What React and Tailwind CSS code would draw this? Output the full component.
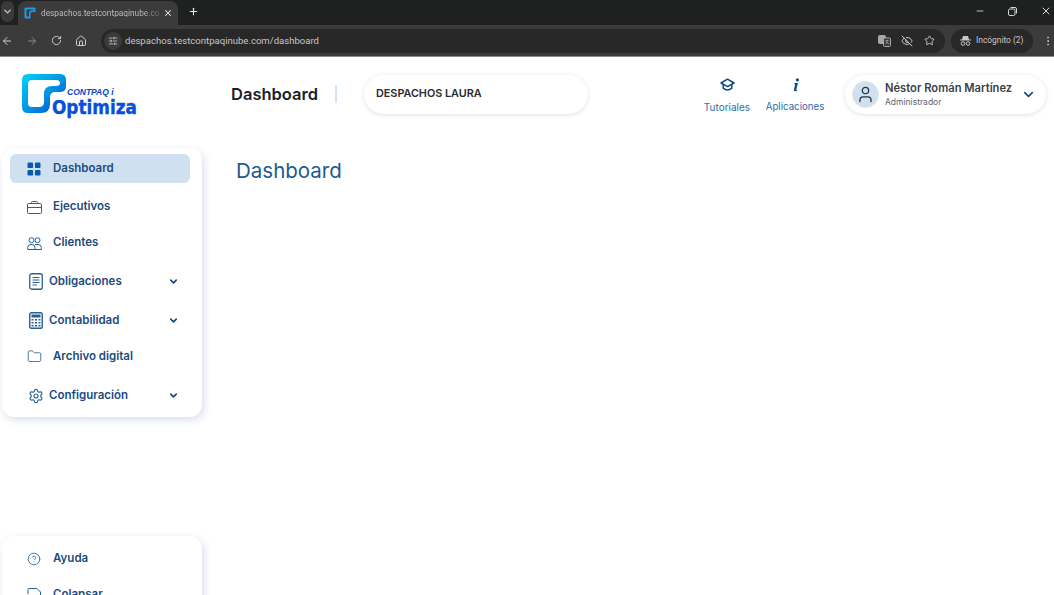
import React from "react";
import { ChevronDown, X, Plus, ArrowLeft, ArrowRight, RotateCw, Home, SlidersHorizontal, EyeOff, Star, EllipsisVertical, Minus, User, Folder, Settings, CircleHelp } from "lucide-react";

const inter = { fontFamily: "Inter, sans-serif" };
const roboto = { fontFamily: "Roboto, sans-serif" };

function Logo() {
    return (
        <svg width="120" height="48" viewBox="0 -2 120 48" className="block">
            <defs>
                <linearGradient id="lg" x1="0" y1="0" x2="1" y2="1">
                    <stop offset="0" stopColor="#00d4f5" />
                    <stop offset="0.55" stopColor="#0090e0" />
                    <stop offset="1" stopColor="#0a3fc4" />
                </linearGradient>
            </defs>
            <path
                d="M7 1H39Q45 1 45 7V13Q45 19 39 19H34Q30 19 29 23V31Q29 40 20 40H7Q1 40 1 34V7Q1 1 7 1ZM11 7Q7 7 7 11V30Q7 34 11 34H18Q23 34 23 29V21Q23 13 31 13H35Q39 13 39 10Q39 7 35 7Z"
                fill="url(#lg)"
                fillRule="evenodd"
            />
            <text x="46" y="22" fontFamily="Liberation Sans, sans-serif" fontSize="8.5" fontWeight="700" fontStyle="italic" fill="#0b46c8">CONTPAQ i</text>
            <text x="31" y="41" fontFamily="DejaVu Sans, sans-serif" fontSize="20" fontWeight="700" fill="#0650dc" stroke="#0650dc" strokeWidth="0.4" textLength="85" lengthAdjust="spacingAndGlyphs">Optimiza</text>
        </svg>
    );
}

function BrowserBar() {
    return (
        <div className="text-[#c7c7c7]" style={inter}>
            <div className="h-[25px] bg-[#1f2120] flex items-end pl-[1px]">
                <div className="h-[21px] w-[13px] mb-[3px] rounded-md bg-[#3a3a3a] flex items-center justify-center">
                    <ChevronDown size={11} strokeWidth={3} />
                </div>
                <div className="ml-[4px] h-[24px] w-[160px] bg-[#3b3b3b] rounded-t-lg flex items-center pl-[6px] pr-[5px]">
                    <svg width="12" height="12" viewBox="0 0 12 12" className="shrink-0">
                        <path d="M1.5 0.5H10.5Q11.5 0.5 11.5 1.5V5H8Q6.5 5 6.5 6.5V11.5H1.5Q0.5 11.5 0.5 10.5V1.5Q0.5 0.5 1.5 0.5ZM2.5 2.5V9.5H5V6Q5 3.5 7.5 3.5H9.5V2.5Z" fill="#1e9be8" fillRule="evenodd" />
                    </svg>
                    <span className="ml-[5px] text-[8.3px] leading-none whitespace-nowrap bg-linear-to-r from-[#c4c4c4] from-85% to-[#5a5a5a] bg-clip-text text-transparent" style={roboto}>despachos.testcontpaqinube.co</span>
                    <X size={10} strokeWidth={2.5} className="ml-auto shrink-0 text-[#e6e6e6]" />
                </div>
                <Plus size={11} strokeWidth={2.5} className="ml-[10px] mb-[8px] text-[#e6e6e6]" />
                <div className="ml-auto flex items-center mb-[8px] text-[#d8d8d8]">
                    <Minus size={10} className="mr-[23px]" />
                    <svg width="9" height="9" viewBox="0 0 9 9" fill="none" stroke="#d8d8d8" className="mr-[23px]">
                        <rect x="0.5" y="2" width="6.5" height="6.5" rx="1.5" />
                        <path d="M2.5 0.5H7Q8.5 0.5 8.5 2V6.5" />
                    </svg>
                    <X size={12} className="mr-[2px]" />
                </div>
            </div>
            <div className="h-[32px] bg-[#3b3b3b] flex items-center border-b border-[#8a8a8a]">
                <ArrowLeft size={12} className="ml-[1px] text-[#d0d0d0]" />
                <ArrowRight size={12} className="ml-[13px] text-[#8a8a8a]" />
                <RotateCw size={11} className="ml-[13px] text-[#d0d0d0]" />
                <Home size={12} className="ml-[13px] text-[#d0d0d0]" />
                <div className="ml-[14px] w-[844px] h-[24px] rounded-full bg-[#282828] flex items-center pl-[3px] pr-[10px]">
                    <div className="w-[18px] h-[18px] rounded-full bg-[#3b3b3b] flex items-center justify-center">
                        <SlidersHorizontal size={10} />
                    </div>
                    <span className="ml-[3px] text-[9.55px] leading-none text-[#c7c7c7]" style={roboto}>despachos.testcontpaqinube.com/dashboard</span>
                    <svg width="13" height="12" viewBox="0 0 13 12" fill="none" stroke="#a8a8a8" className="ml-auto">
                        <rect x="0.5" y="0.5" width="7" height="8" rx="1" fill="#a8a8a8" />
                        <rect x="5.5" y="3" width="7" height="8.5" rx="1" fill="#3b3b3b" />
                        <path d="M7.5 5.5H10.5M9 5.5Q9 8 7.5 9M9 7Q9.5 8.5 11 9" strokeWidth="0.8" />
                    </svg>
                    <EyeOff size={12} className="ml-[10px]" />
                    <Star size={11} className="ml-[11px]" />
                </div>
                <div className="ml-[6px] w-[82px] h-[24px] rounded-full bg-[#282828] flex items-center pl-[9px]">
                    <svg width="11" height="11" viewBox="0 0 11 11" fill="#c7c7c7">
                        <path d="M3 1H8L9 4.5H11V5.5H0V4.5H2Z" />
                        <circle cx="3" cy="8.5" r="1.8" fill="none" stroke="#c7c7c7" />
                        <circle cx="8" cy="8.5" r="1.8" fill="none" stroke="#c7c7c7" />
                    </svg>
                    <span className="ml-[5px] text-[8.4px] leading-none whitespace-nowrap" style={roboto}>Incógnito (2)</span>
                </div>
                <EllipsisVertical size={12} className="ml-[9px]" />
            </div>
        </div>
    );
}

function CapIcon() {
    return (
        <svg width="15" height="14" viewBox="0 0 15 14" fill="none" stroke="#0b4a85" strokeWidth="1.5" strokeLinejoin="round">
            <path d="M7.5 1.2L14 5L7.5 8.6L1 5Z" />
            <path d="M3.2 6.4V10.2Q7.5 13.6 11.8 10.2V6.4" />
        </svg>
    );
}

function AppsIcon() {
    return (
        <svg width="15" height="14" viewBox="0 0 15 14" fill="#0b4a85">
            <circle cx="9.4" cy="1.8" r="1.6" />
            <path d="M6.6 5H10L8.3 11.2Q8 12 9 11.8L8.7 13Q5.3 14 6 11.5L7.2 6.2L6.3 6.2Z" />
        </svg>
    );
}

function Header() {
    return (
        <header className="h-[74px] mb-[17px] flex items-center">
            <div className="ml-[21px] w-[210px] pt-[2px]">
                <Logo />
            </div>
            <h2 className="text-[16.5px] font-semibold text-[#1d1d1f] leading-none">Dashboard</h2>
            <div className="ml-[17px] w-[2px] h-[18px] bg-[#d5e4f4]" />
            <div className="ml-[27px] w-[224px] h-[39px] rounded-[20px] bg-white shadow-[0_1px_4px_rgba(30,60,110,0.16)] flex items-center pl-[12px]">
                <span className="text-[10.8px] font-semibold text-[#2a2a2c]">DESPACHOS LAURA</span>
            </div>
            <div className="ml-auto flex items-start text-[#2f6da5] text-[10px] leading-none">
                <div className="flex flex-col items-center w-[46px]">
                    <div className="h-[17px] flex items-center"><CapIcon /></div>
                    <span className="mt-[9px]">Tutoriales</span>
                </div>
                <div className="flex flex-col items-center ml-[16px] w-[58px]">
                    <div className="h-[17px] flex items-center"><AppsIcon /></div>
                    <span className="mt-[9px] text-[9.7px]">Aplicaciones</span>
                </div>
            </div>
            <div className="ml-[21px] mr-[8px] w-[201px] h-[39px] rounded-[20px] bg-white shadow-[0_1px_4px_rgba(30,60,110,0.16)] flex items-center pl-[8px]">
                <div className="w-[25px] h-[25px] rounded-full bg-[#cfe0f1] flex items-center justify-center ring-1 ring-[#e6e6e6]">
                    <User size={19} strokeWidth={1.6} className="text-[#27323f]" />
                </div>
                <div className="ml-[7px] flex flex-col">
                    <span className="text-[11.2px] font-semibold leading-[15px] text-[#3a3f47] whitespace-nowrap">Néstor Román Martínez</span>
                    <span className="text-[8.5px] leading-[12px] text-[#5f6670]">Administrador</span>
                </div>
                <ChevronDown size={15} strokeWidth={2.5} className="ml-auto mr-[10px] text-[#0b4a85]" />
            </div>
        </header>
    );
}

function NavItem({ icon, label, active, caret, h = "h-[36px]" }) {
    return (
        <div className={`${h} ml-[8px] mr-[12px] rounded-[6px] flex items-center ${active ? "bg-[#cfe0f1]" : ""} ${caret ? "pl-[17px]" : "pl-[16px]"}`}>
            <div className={`${caret ? "w-[18px]" : "w-[16px]"} shrink-0 flex items-center justify-center text-[#285f94]`}>{icon}</div>
            <span className={`${caret ? "ml-[4px]" : "ml-[11px]"} ${active ? "pt-[1px]" : ""} text-[11.5px] font-semibold text-[#1b4c80]`}>{label}</span>
            {caret && <ChevronDown size={11} strokeWidth={3.5} className="ml-auto mr-[11px] text-[#0b4a85]" />}
        </div>
    );
}

const DashIcon = (
    <svg width="14" height="14" viewBox="0 0 14 14" fill="#0b5ab0">
        <rect x="0.5" y="0.5" width="5.6" height="5.6" rx="1.2" />
        <rect x="7.9" y="0.5" width="5.6" height="5.6" rx="1.2" />
        <rect x="0.5" y="7.9" width="5.6" height="5.6" rx="1.2" />
        <rect x="7.9" y="7.9" width="5.6" height="5.6" rx="1.2" />
    </svg>
);

const CaseIcon = (
    <svg width="15" height="13" viewBox="0 0 15 13" fill="none" stroke="currentColor">
        <rect x="0.5" y="2.5" width="14" height="10" rx="1.2" />
        <path d="M0.5 6.5H14.5M4.5 2.5V1.5Q4.5 0.5 5.5 0.5H9.5Q10.5 0.5 10.5 1.5V2.5" />
    </svg>
);

const PeopleIcon = (
    <svg width="15" height="13" viewBox="0 0 15 13" fill="none" stroke="currentColor">
        <circle cx="4.5" cy="3.2" r="2.5" />
        <circle cx="10.5" cy="3.2" r="2.5" />
        <path d="M0.7 12.5V10.5Q0.7 7.5 4 7.5H5Q8 7.5 8 10.5V12.5ZM8 7.5H11Q14.3 7.5 14.3 10.5V12.5H8" />
    </svg>
);

const DocIcon = (
    <svg width="14" height="17" viewBox="0 0 14 17" fill="none" stroke="currentColor">
        <rect x="0.75" y="0.75" width="12.5" height="15.5" rx="2" strokeWidth="1.3" />
        <path d="M3.5 4.5H10.5M3.5 7H10.5M3.5 9.5H10.5M3.5 12H8" />
    </svg>
);

const CalcIcon = (
    <svg width="14" height="17" viewBox="0 0 14 17">
        <rect x="0.75" y="0.75" width="12.5" height="15.5" rx="1.5" fill="none" stroke="#285f94" strokeWidth="1.4" />
        <rect x="2.5" y="2.5" width="9" height="3" fill="#285f94" />
        <path d="M2.5 7H4.5V8.6H2.5ZM6 7H8V8.6H6ZM9.5 7H11.5V8.6H9.5ZM2.5 10H4.5V11.6H2.5ZM6 10H8V11.6H6ZM9.5 10H11.5V11.6H9.5ZM2.5 13H4.5V14.6H2.5ZM6 13H8V14.6H6ZM9.5 13H11.5V14.6H9.5Z" fill="#285f94" />
    </svg>
);

const CollapseIcon = (
    <svg width="15" height="14" viewBox="0 0 15 14" fill="none" stroke="currentColor">
        <path d="M1 6V1.5Q1 0.5 2 0.5H10L13.5 4V12.5Q13.5 13.5 12.5 13.5H4" />
        <path d="M8 9.5H1.5M4 7L1.5 9.5L4 12" />
    </svg>
);

export default function App() {
    return (
        <div className="h-screen overflow-hidden bg-white" style={inter}>
            <BrowserBar />
            <Header />
            <div className="flex">
                <aside className="ml-[2px] w-[200px] shrink-0 flex flex-col gap-[119px]">
                    <nav className="h-[269px] rounded-[12px] bg-white shadow-[2px_3px_8px_rgba(40,80,140,0.18)] pt-[6px]">
                        <NavItem icon={DashIcon} label="Dashboard" active h="h-[29px]" />
                        <div className="h-[6px]" />
                        <NavItem icon={CaseIcon} label="Ejecutivos" />
                        <NavItem icon={PeopleIcon} label="Clientes" />
                        <div className="h-[1px]" />
                        <NavItem icon={DocIcon} label="Obligaciones" caret h="h-[39px]" />
                        <NavItem icon={CalcIcon} label="Contabilidad" caret h="h-[39px]" />
                        <NavItem icon={<Folder size={15} strokeWidth={1.3} />} label="Archivo digital" h="h-[33px]" />
                        <div className="h-[3px]" />
                        <NavItem icon={<Settings size={16} strokeWidth={1.7} />} label="Configuración" caret h="h-[39px]" />
                    </nav>
                    <div className="h-[100px] rounded-[12px] bg-white shadow-[2px_3px_8px_rgba(40,80,140,0.18)] pt-[5px]">
                        <NavItem icon={<CircleHelp size={14} strokeWidth={1.4} />} label="Ayuda" />
                        <NavItem icon={CollapseIcon} label="Colapsar" />
                    </div>
                </aside>
                <main className="ml-[34px] pt-[7px]">
                    <h1 className="text-[20.5px] leading-[32px] font-normal text-[#1b5a92]">Dashboard</h1>
                </main>
            </div>
        </div>
    );
}
